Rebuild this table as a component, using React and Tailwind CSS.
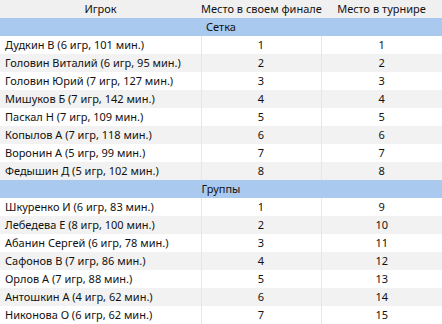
const setka = [
  ["Дудкин В (6 игр, 101 мин.)", 1, 1],
  ["Головин Виталий (6 игр, 95 мин.)", 2, 2],
  ["Головин Юрий (7 игр, 127 мин.)", 3, 3],
  ["Мишуков Б (7 игр, 142 мин.)", 4, 4],
  ["Паскал Н (7 игр, 109 мин.)", 5, 5],
  ["Копылов А (7 игр, 118 мин.)", 6, 6],
  ["Воронин А (5 игр, 99 мин.)", 7, 7],
  ["Федышин Д (5 игр, 102 мин.)", 8, 8],
];

const gruppy = [
  ["Шкуренко И (6 игр, 83 мин.)", 1, 9],
  ["Лебедева Е (8 игр, 100 мин.)", 2, 10],
  ["Абанин Сергей (6 игр, 78 мин.)", 3, 11],
  ["Сафонов В (7 игр, 86 мин.)", 4, 12],
  ["Орлов А (7 игр, 88 мин.)", 5, 13],
  ["Антошкин А (4 игр, 62 мин.)", 6, 14],
  ["Никонова О (6 игр, 62 мин.)", 7, 15],
];

function Rows({ rows }) {
  return rows.map(([name, place, total], i) => (
    <tr key={name} className={i % 2 === 0 ? "bg-white" : "bg-[#f2f2f2]"}>
      <td className="h-[18px] p-0 border-r border-[#e6e6e6] pl-[5px] text-left">{name}</td>
      <td className="h-[18px] p-0 border-r border-[#e6e6e6] text-center">{place}</td>
      <td className="h-[18px] p-0 text-center">{total}</td>
    </tr>
  ));
}

function Group({ title }) {
  return (
    <tr className="bg-[#a9c9ef]">
      <td colSpan={3} className="h-[18px] p-0 text-center">
        {title}
      </td>
    </tr>
  );
}

export default function App() {
  return (
    <div className="w-[442px] h-[324px] overflow-hidden bg-white text-[#111] font-['Noto_Sans',sans-serif] text-[11px] leading-[18px] whitespace-nowrap">
      <table className="w-full table-fixed border-collapse">
        <colgroup>
          <col className="w-[201px]" />
          <col className="w-[120px]" />
          <col />
        </colgroup>
        <thead>
          <tr className="bg-[#f0f0f0]">
            <th className="h-[18px] p-0 font-normal text-center">Игрок</th>
            <th className="h-[18px] p-0 font-normal text-center">Место в своем финале</th>
            <th className="h-[18px] p-0 font-normal text-center">Место в турнире</th>
          </tr>
        </thead>
        <tbody>
          <Group title="Сетка" />
          <Rows rows={setka} />
          <Group title="Группы" />
          <Rows rows={gruppy} />
        </tbody>
      </table>
    </div>
  );
}
